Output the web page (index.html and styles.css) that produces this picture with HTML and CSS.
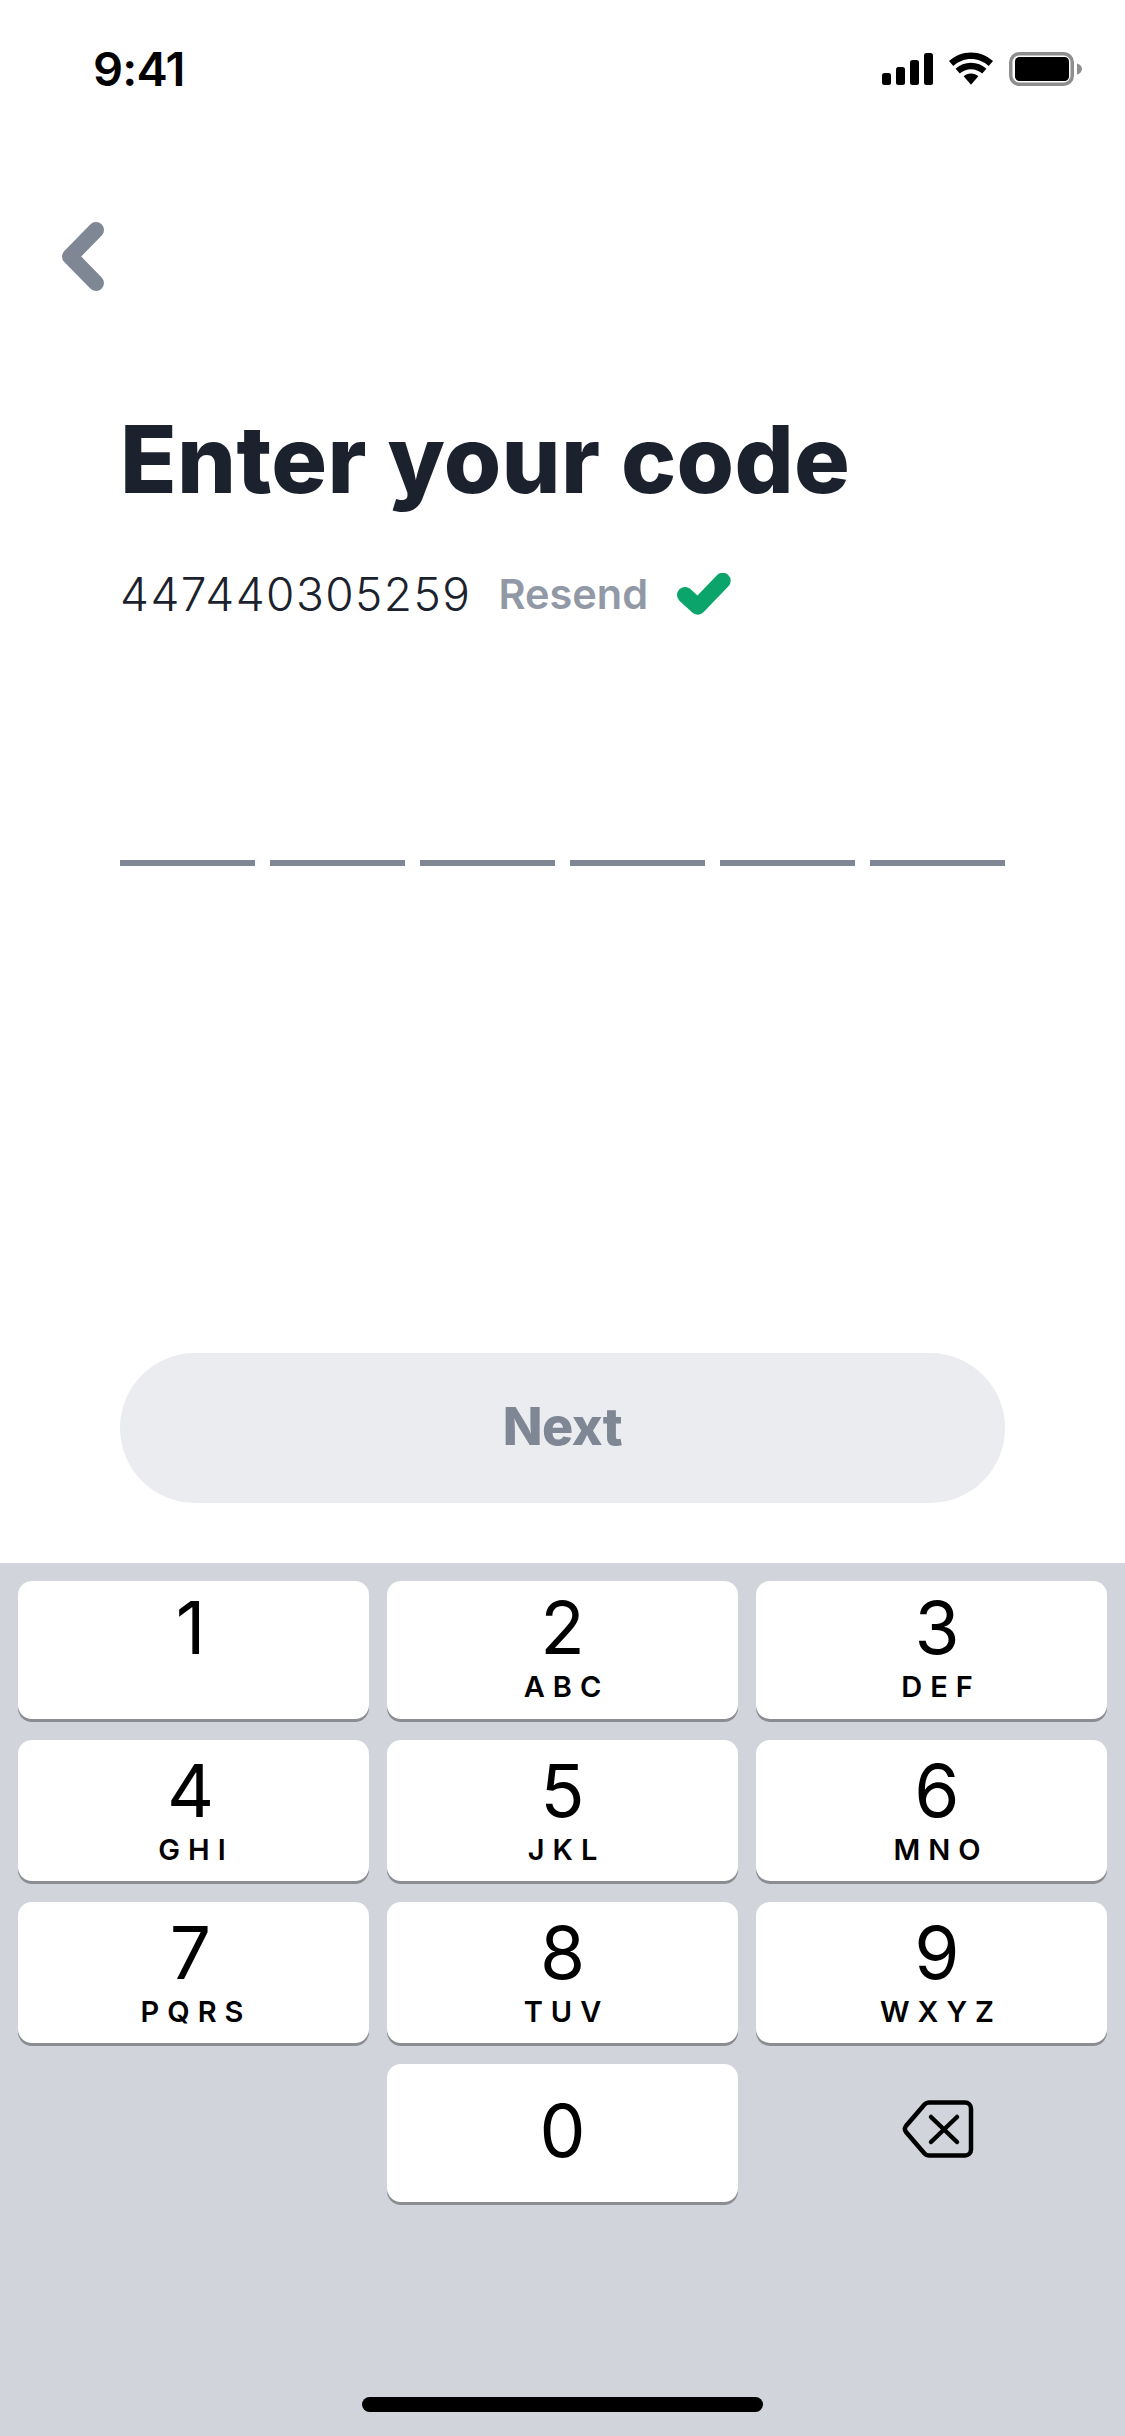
FILE: index.html
```html
<!DOCTYPE html>
<html lang="en">
<head>
<meta charset="utf-8">
<title>Enter your code</title>
<link rel="stylesheet" href="styles.css">
</head>
<body>
<div class="screen">
  <header class="status">
    <span class="time">9:41</span>
    <div class="status-icons">
      <svg class="ic-signal" width="51" height="32" viewBox="0 0 51 32"><rect x="0" y="20" width="9" height="12" rx="2.500"/><rect x="14" y="14" width="9" height="18" rx="2.500"/><rect x="28" y="7" width="9" height="25" rx="2.500"/><rect x="42" y="0" width="9" height="32" rx="2.500"/></svg>
      <svg class="ic-wifi" width="46" height="33" viewBox="0 0 46 33"><path d="M23 7c6.800 0 13 2.700 17.700 7l4.300-5C39.100 3.600 31.400.400 23 .400S6.900 3.600 1 9l4.300 5C10 9.700 16.200 7 23 7z"/><path d="M23 17.300c4.300 0 8.200 1.600 11.200 4.300l4.200-4.900C34.300 13 28.900 10.800 23 10.800s-11.300 2.200-15.400 5.900l4.200 4.900c3-2.700 6.900-4.300 11.200-4.300z"/><path d="M23 21.500c-2.800 0-5.300 1-7.300 2.700L23 32.800l7.300-8.600c-2-1.700-4.500-2.700-7.300-2.700z"/></svg>
      <svg class="ic-battery" width="73" height="34" viewBox="0 0 73 34"><rect x="1.750" y="1.750" width="61.500" height="30.500" rx="8.500" fill="none" stroke="#8e8e8e" stroke-width="3.500"/><rect x="6" y="5" width="54" height="24" rx="4.500"/><path d="M68 11.500c2.800.8 5 3 5 5.500s-2.200 4.700-5 5.500z" fill="#8e8e8e"/></svg>
    </div>
  </header>

  <nav class="nav">
    <svg class="back" width="44" height="70" viewBox="0 0 44 70" aria-label="Back"><path d="M35 8 L9 34.500 L35 61" fill="none" stroke="#7f8694" stroke-width="16" stroke-linecap="round" stroke-linejoin="round"/></svg>
  </nav>

  <main class="content">
    <h1 class="title">Enter your code</h1>
    <div class="phone-row">
      <span class="phone">447440305259</span>
      <span class="resend">Resend</span>
      <svg class="check" width="54" height="42" viewBox="0 0 54 42"><path d="M8 22 L20.700 33.700 L45.700 7.700" fill="none" stroke="#0ba56b" stroke-width="16" stroke-linecap="round" stroke-linejoin="round"/></svg>
    </div>
    <div class="code">
      <span class="slot"></span><span class="slot"></span><span class="slot"></span><span class="slot"></span><span class="slot"></span><span class="slot"></span>
    </div>
    <button class="next">Next</button>
  </main>

  <section class="keyboard">
    <div class="keys">
      <div class="key short col-l"><span class="num">1</span></div>
      <div class="key short"><span class="num">2</span><span class="let">ABC</span></div>
      <div class="key short col-r"><span class="num">3</span><span class="let">DEF</span></div>
      <div class="key col-l"><span class="num">4</span><span class="let">GHI</span></div>
      <div class="key"><span class="num">5</span><span class="let">JKL</span></div>
      <div class="key col-r"><span class="num">6</span><span class="let">MNO</span></div>
      <div class="key col-l"><span class="num">7</span><span class="let">PQRS</span></div>
      <div class="key"><span class="num">8</span><span class="let">TUV</span></div>
      <div class="key col-r"><span class="num">9</span><span class="let">WXYZ</span></div>
      <div class="blank"></div>
      <div class="key zero"><span class="num">0</span></div>
      <div class="del">
        <svg width="72" height="60" viewBox="0 0 72 60" aria-label="Delete"><path d="M27 3.500 H63 a6 6 0 0 1 6 6 V50.500 a6 6 0 0 1 -6 6 H27 a6 6 0 0 1 -4.500 -2 L4 33 a5 5 0 0 1 0 -6 L22.500 5.500 a6 6 0 0 1 4.500 -2 Z" fill="none" stroke="#000" stroke-width="4.500"/><path d="M29 18 L55 43 M55 18 L29 43" fill="none" stroke="#000" stroke-width="4.500" stroke-linecap="round"/></svg>
      </div>
    </div>
    <div class="home"></div>
  </section>
</div>
</body>
</html>
```
FILE: styles.css
```css
* { box-sizing: border-box; }
html, body { margin: 0; padding: 0; }
body { background: #fff; }
.screen {
  width: 1125px;
  height: 2436px;
  display: flex;
  flex-direction: column;
  background: #fff;
  overflow: hidden;
  font-family: "Inter", "Liberation Sans", sans-serif;
}
.status {
  height: 100px;
  padding: 52px 43px 0 93px;
  display: flex;
  justify-content: space-between;
  align-items: flex-start;
}
.time {
  font-weight: 600;
  font-size: 47px;
  line-height: 34px;
  color: #000;
  letter-spacing: -0.8px;
}
.status-icons { display: flex; align-items: flex-start; gap: 15px; }
.ic-signal { margin-top: 1px; }
.nav { height: 299px; padding: 122px 0 0 61px; }
.back { display: block; }
.content {
  flex: 1;
  display: flex;
  flex-direction: column;
  padding: 0 120px;
}
.title {
  margin: 0;
  font-size: 93px;
  line-height: 120px;
  font-weight: 800;
  letter-spacing: 0.3px;
  color: #1b222d;
  white-space: nowrap;
}
.phone-row {
  margin-top: 50px;
  height: 50px;
  display: flex;
  align-items: center;
}
.phone { font-size: 46px; color: #1b222d; line-height: 50px; font-weight: 300; letter-spacing: 1.45px; }
.resend { margin-left: 27px; font-size: 41.5px; font-weight: 600; color: #9299a6; line-height: 50px; }
.check { margin-left: 29px; display: block; }
.code {
  margin-top: 241px;
  display: grid;
  grid-template-columns: repeat(6, 135px);
  column-gap: 15px;
}
.slot { height: 6px; background: #7f8694; }
.next {
  margin-top: 487px;
  height: 150px;
  padding: 0 0 3px;
  border: 0;
  border-radius: 75px;
  background: #ebecf0;
  color: #7f8694;
  font-family: inherit;
  font-size: 52px;
  font-weight: 800;
  letter-spacing: -0.5px;
}
.keyboard {
  height: 873px;
  background: #d1d4db;
  display: flex;
  flex-direction: column;
  padding: 18px 18px 0;
  position: relative;
}
.keys {
  display: grid;
  grid-template-columns: 351px 351px 351px;
  grid-template-rows: 138px 141px 141px 138px;
  column-gap: 18px;
  row-gap: 21px;
}
.key {
  background: #fff;
  border-radius: 14px;
  box-shadow: 0 3px 0 #8b8d92;
  display: flex;
  flex-direction: column;
  align-items: center;
  color: #000;
}
.col-l .num { margin-right: 6px; }
.col-r { padding-left: 11px; }
.num { font-size: 73px; line-height: 72px; margin-top: 15px; font-weight: 400; }
.key.short .num { margin-top: 11px; }
.let { font-size: 29px; line-height: 28px; font-weight: 600; letter-spacing: 8px; margin-right: -8px; margin-top: 9px; }
.col-l .let { margin-right: -5px; }
.key.zero .num { margin-top: 31px; }
.del { display: flex; justify-content: center; padding: 35px 0 0 13px; }
.home {
  position: absolute;
  left: 362px;
  bottom: 24px;
  width: 401px;
  height: 15px;
  border-radius: 8px;
  background: #000;
}
```
